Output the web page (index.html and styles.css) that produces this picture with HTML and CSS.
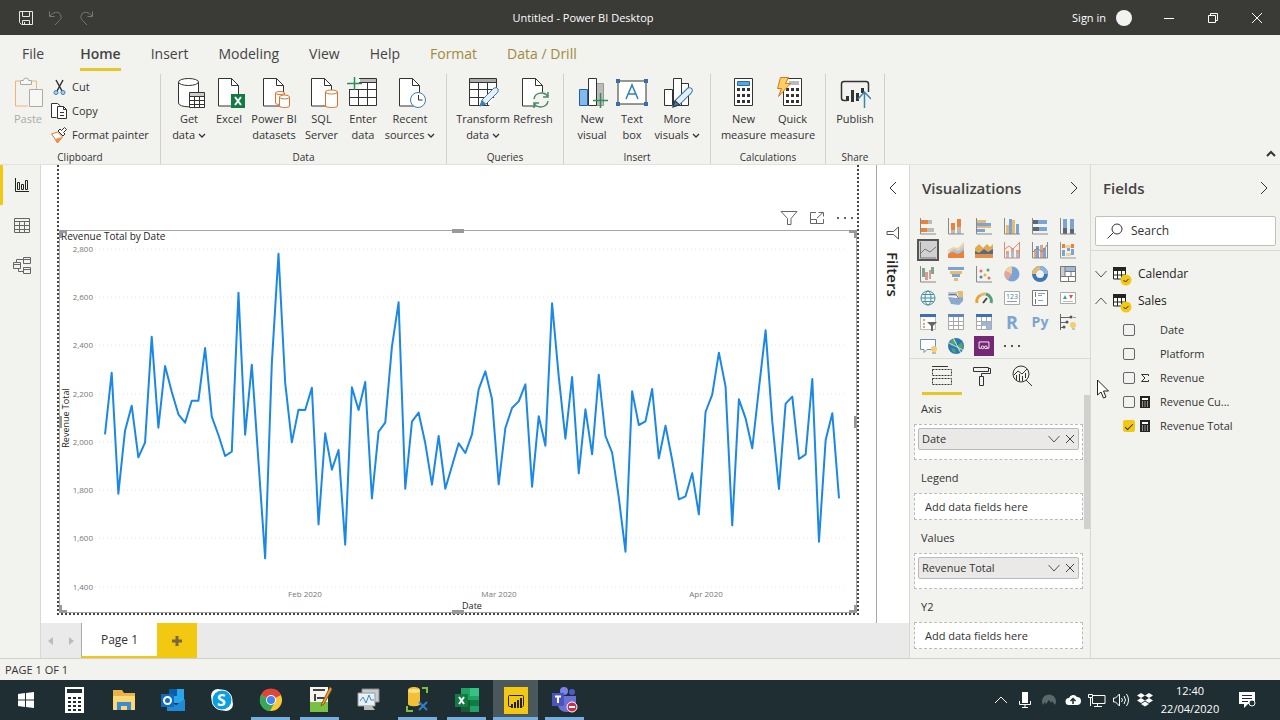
FILE: index.html
```html
<!DOCTYPE html>
<html lang="en">
<head>
    <meta charset="UTF-8">
    <meta name="viewport" content="width=device-width, initial-scale=1.0">
    <title>Untitled - Power BI Desktop</title>
    <link rel="stylesheet" href="styles.css">
</head>
<body>
    <svg class="defs" aria-hidden="true">
        <symbol id="doc" viewBox="0 0 32 32"><path d="M5.500 1.500h13l7 7v20.500h-20z" fill="#fff" stroke="#333"/><path d="M18.500 1.500v7h7" fill="none" stroke="#333"/></symbol>
        <symbol id="chev" viewBox="0 0 8 6"><path d="M1 1l3 3 3-3" fill="none" stroke="#333" stroke-width="1.300"/></symbol>
        <symbol id="down" viewBox="0 0 12 12"><path d="M0.500 3l5.500 6 5.500-6" fill="none" stroke="#555"/></symbol>
        <symbol id="up" viewBox="0 0 12 12"><path d="M0.500 9l5.500-6 5.500 6" fill="none" stroke="#555"/></symbol>
        <symbol id="cross" viewBox="0 0 12 12"><path d="M2 2l8 8M10 2l-8 8" fill="none" stroke="#444"/></symbol>
        <symbol id="pencil" viewBox="0 0 20 20"><path d="M1 19l2-6L15 1q3-1 4 1 1 2-1 4L7 17z" fill="#e6f0fa" stroke="#3b7db5"/><path d="M1 19l2-6 4 4z" fill="#3b7db5"/></symbol>
        <symbol id="tbl" viewBox="0 0 19 19"><path d="M.5 1h12v11H.5z" fill="#fff" stroke="#252423"/><path d="M0 0h13v4H0z" fill="#252423"/><path d="M0 8h13M4.500 3v9M8.500 3v9" stroke="#252423"/><circle cx="13" cy="13" r="5.500" fill="#f2c811"/><path d="M10.500 13l2 2 3-3" fill="none" stroke="#252423"/></symbol>
        <symbol id="calc" viewBox="0 0 10 12"><path d="M0 0h10v12H0z" fill="#252423"/><path d="M2 2h6v2H2zM2 5.500h1v1H2zM4.500 5.500h1v1h-1zM7 5.500h1v1H7zM2 7.500h1v1H2zM4.500 7.500h1v1h-1zM7 7.500h1v1H7zM2 9.500h1v1H2zM4.500 9.500h1v1h-1zM7 9.500h1v1H7z" fill="#fff"/></symbol>
        <symbol id="keypad" viewBox="0 0 20 28"><path d="M.5.500h18v27H.5z" fill="#fff" stroke="#333"/><path d="M3 10h3v3H3zM8 10h3v3H8zM13 10h3v3h-3zM3 16h3v3H3zM8 16h3v3H8zM13 16h3v3h-3zM3 22h3v3H3zM8 22h3v3H8zM13 22h3v3h-3z" fill="#333"/></symbol>
    </svg>

    <header class="titlebar">
        <div class="quick">
            <button aria-label="Save"><svg width="16" height="16" fill="none" stroke="#e8e8e8"><path d="M1.500 1.500h13v13h-11l-2-2zM4.500 1.500v5h7v-5M4.500 14.500v-4h7v4M6.500 12v2"/></svg></button>
            <button aria-label="Undo"><svg width="16" height="16" fill="none" stroke="#777"><path d="M1.500 1.500v5h5M2 6c3-4 8-5 10-2s1 5-1 7l-4 4"/></svg></button>
            <button aria-label="Redo"><svg width="16" height="16" fill="none" stroke="#777"><path d="M14.500 1.500v5h-5M14 6c-3-4-8-5-10-2s-1 5 1 7l4 4"/></svg></button>
        </div>
        <div class="window-title">Untitled - Power BI Desktop</div>
        <div class="window-actions">
            <button class="signin">Sign in <span class="avatar"></span></button>
            <button class="win" aria-label="Minimize"><svg width="12" height="12" stroke="#fff"><path d="M1 6.500h10"/></svg></button>
            <button class="win" aria-label="Restore"><svg width="12" height="12" fill="none" stroke="#fff"><path d="M1.500 3.500h7v7h-7zM3.500 3V1.500h7v7H9"/></svg></button>
            <button class="win" aria-label="Close"><svg width="12" height="12" stroke="#fff"><path d="M1 1l10 10M11 1L1 11"/></svg></button>
        </div>
    </header>

    <nav class="tabs">
        <button class="file">File</button>
        <button class="active">Home</button>
        <button>Insert</button>
        <button>Modeling</button>
        <button>View</button>
        <button>Help</button>
        <button class="context">Format</button>
        <button class="context">Data / Drill</button>
    </nav>

    <section class="ribbon">
        <div class="group">
            <div class="tools clipboard">
                <button class="tool disabled" disabled><svg class="icon" viewBox="0 0 32 32" fill="none"><path d="M8 4H3.500v25H16" stroke="#f0b478"/><path d="M20 4h4.500v8" stroke="#f0b478"/><path d="M8.500 3.500h3q0-2.500 2.500-2.500t2.500 2.500h3v4h-11zM17.500 12.500h13v17h-13z" fill="#f7f7f5" stroke="#aaa"/></svg>Paste</button>
                <div class="small-tools">
                    <button><svg width="18" height="18" viewBox="0 0 18 18" fill="none"><path d="M6 2l6 11M13 2L7 13" stroke="#333" stroke-width="1.500"/><circle cx="6" cy="14.500" r="2" stroke="#3b7db5" fill="#a9d0ee"/><circle cx="13" cy="14.500" r="2" stroke="#3b7db5" fill="#a9d0ee"/></svg>Cut</button>
                    <button><svg width="18" height="18" viewBox="0 0 18 18" fill="#fff" stroke="#333"><path d="M6.500 15.500h-5v-14h6l3 2.500"/><path d="M7.500 4.500h6l3 3v9h-9zM13.500 4.500v3h3M10 10.500h4M10 13.500h4"/></svg>Copy</button>
                    <button><svg width="18" height="18" viewBox="0 0 18 18" fill="none"><path d="M1.500 8l6-2 5 5-5 6-2-3-1-2z" fill="#fff" stroke="#e07a2e"/><path d="M5 13l7-2-4 6z" fill="#e8944c"/><path d="M8 5l5 5 2-2-1.500-1.500 3-3-2-2-3 3L10 3z" fill="#fff" stroke="#333"/></svg>Format painter</button>
                </div>
            </div>
            <div class="caption">Clipboard</div>
        </div>

        <div class="group">
            <div class="tools data">
                <button class="tool"><svg class="icon" viewBox="0 0 32 32"><path d="M5.500 5v21c0 5 20 5 20 0V5" fill="#fff" stroke="#333"/><ellipse cx="15.500" cy="5" rx="10" ry="3.500" fill="#fff" stroke="#333"/><path d="M16.500 15.500h15v15h-15z" fill="#fff" stroke="#333"/><path d="M17 16h14v3H17z" fill="#ccc"/><path d="M16 19.500h16M16 23.500h16M16 27.500h16M21.500 19v12M26.500 19v12" stroke="#333"/></svg>Get<br><span>data <svg class="chev"><use href="#chev"/></svg></span></button>
                <button class="tool"><svg class="icon" viewBox="0 0 32 32"><use href="#doc"/><path d="M18 17h14v14H18z" fill="#107c41"/><path d="M22 20l6 8M28 20l-6 8" stroke="#fff" stroke-width="2"/></svg>Excel</button>
                <button class="tool"><svg class="icon" viewBox="0 0 32 32"><use href="#doc"/><path d="M17.500 16v10c0 2 9 2 9 0V16z" fill="#fff" stroke="#d9722e"/><ellipse cx="22" cy="16" rx="4.500" ry="1.500" fill="#fff" stroke="#d9722e"/><path d="M21.500 20v9c0 2 10 2 10 0v-9z" fill="#fff" stroke="#d9722e"/><ellipse cx="26.500" cy="20" rx="5" ry="2" fill="#fff" stroke="#d9722e"/></svg>Power BI<br>datasets</button>
                <button class="tool"><svg class="icon" viewBox="0 0 32 32"><use href="#doc"/><path d="M19.500 15v14c0 2 12 2 12 0V15z" fill="#fff" stroke="#d9722e"/><ellipse cx="25.500" cy="15" rx="6" ry="2" fill="#fff" stroke="#d9722e"/></svg>SQL<br>Server</button>
                <button class="tool"><svg class="icon" viewBox="0 0 32 32"><path d="M2.500 1.500h27v27h-27z" fill="#fff" stroke="#333"/><path d="M13 2h16v3H13z" fill="#bbb"/><path d="M2 5.500h27M2 12.500h27M2 20.500h27M11.500 5v23M20.500 5v23" stroke="#333"/><path d="M0 0h12v12H0z" fill="#f3f2f1"/><path d="M0 6.500h15M7.500 0v13" stroke="#2f8f5b" stroke-width="1.500"/></svg>Enter<br>data</button>
                <button class="tool"><svg class="icon" viewBox="0 0 32 32"><use href="#doc"/><circle cx="24" cy="23" r="7.500" fill="#fff" stroke="#3b7db5"/><path d="M24.500 18v5h4" fill="none" stroke="#333"/></svg>Recent<br><span>sources <svg class="chev"><use href="#chev"/></svg></span></button>
            </div>
            <div class="caption">Data</div>
        </div>

        <div class="group">
            <div class="tools queries">
                <button class="tool"><svg class="icon" viewBox="0 0 32 32"><path d="M2.500 1.500h27v27h-27z" fill="#fff" stroke="#333"/><path d="M3 2h26v3H3z" fill="#aaa"/><path d="M2 5.500h27M2 12.500h27M2 20.500h27M11.500 5v23M20.500 5v23" stroke="#333"/><path d="M22 29h9V14z" fill="#f3f2f1"/><use href="#pencil" x="12" y="10" width="20" height="20"/></svg>Transform<br><span>data <svg class="chev"><use href="#chev"/></svg></span></button>
                <button class="tool"><svg class="icon" viewBox="0 0 32 32"><use href="#doc"/><circle cx="24" cy="23" r="8" fill="#f3f2f1"/><path d="M17 22c1-7 11-8 14-2M31 15v5h-5M31 24c-1 7-11 8-14 2M17 31v-5h5" fill="none" stroke="#4a8a68" stroke-width="1.500"/></svg>Refresh</button>
            </div>
            <div class="caption">Queries</div>
        </div>

        <div class="group">
            <div class="tools insert">
                <button class="tool"><svg class="icon" viewBox="0 0 32 32"><path d="M3.500 12.500h8v16h-8z" fill="#84b9ec" stroke="#1f5fa8"/><path d="M20.500 6.500h7v22h-7z" fill="#bbb" stroke="#999"/><path d="M12.500 1.500h8v27h-8z" fill="#fff" stroke="#333"/><path d="M17 23.500h15M24.500 16v15" stroke="#2f8f5b" stroke-width="1.500"/></svg>New<br>visual</button>
                <button class="tool"><svg class="icon" viewBox="0 0 32 32"><path d="M2 4h28v23H2z" fill="#fff" stroke="#333"/><path d="M0 2h4v4H0zM28 2h4v4h-4zM0 25h4v4H0zM28 25h4v4h-4z" fill="#3b6ea5"/><path d="M10 22l6-14 6 14M12 17h8" fill="none" stroke="#2f80b5" stroke-width="1.500"/></svg>Text<br>box</button>
                <button class="tool"><svg class="icon" viewBox="0 0 32 32" fill="#fff" stroke="#333"><path d="M3.500 12.500h8v16h-8zM20.500 6.500h7v22h-7zM12.500 1.500h8v27h-8z"/><use href="#pencil" x="11" y="10" width="21" height="21"/></svg>More<br><span>visuals <svg class="chev"><use href="#chev"/></svg></span></button>
            </div>
            <div class="caption">Insert</div>
        </div>

        <div class="group">
            <div class="tools calculations">
                <button class="tool"><svg class="icon" viewBox="0 0 32 32"><use href="#keypad" x="6" y="1" width="20" height="28"/><path d="M9.500 4.500h12v4h-12z" fill="#5aa5e0" stroke="#2a6da8"/></svg>New<br>measure</button>
                <button class="tool"><svg class="icon" viewBox="0 0 32 32"><use href="#keypad" x="6" y="1" width="20" height="28"/><path d="M12 4h10v4H12z" fill="#bbb"/><path d="M3.500.500h8l-3 6h5l-12 13 3-8h-4z" fill="#fbd05c" stroke="#d9722e"/></svg>Quick<br>measure</button>
            </div>
            <div class="caption">Calculations</div>
        </div>

        <div class="group">
            <div class="tools share">
                <button class="tool"><svg class="icon" viewBox="0 0 32 32"><path d="M8 23.500H5q-2.500 0-2.500-2.500V7q0-2.500 2.500-2.500h22q2.500 0 2.500 2.500v8" fill="none" stroke="#333" stroke-width="1.500"/><path d="M7 19h3v5H7zM12 13h3v12h-3zM17 16h3v8h-3zM22 11h3v5h-3z" fill="#333"/><path d="M25.500 31V16M19 22l6.500-7 6.500 7" fill="none" stroke="#3b86ad" stroke-width="1.500"/></svg>Publish</button>
            </div>
            <div class="caption">Share</div>
        </div>
        <button class="collapse" aria-label="Collapse the ribbon"><svg width="10" height="8" viewBox="0 0 10 8"><path d="M1 6l4-4 4 4" fill="none" stroke="#333" stroke-width="2"/></svg></button>
    </section>

    <main class="workspace">
        <nav class="rail">
            <button class="active" aria-label="Report view"><svg width="16" height="16" fill="none" stroke="#222"><path d="M1.500 1v13.500H15M3.500 5.500h2v7h-2zM7.500 7.500h2v5h-2zM11.500 3.500h2v9h-2z"/></svg></button>
            <button aria-label="Data view"><svg width="16" height="16" fill="none" stroke="#666"><path d="M.5 1.500h15v14H.5zM.5 4.500h15M.5 8.500h15M.5 12.500h15M5.500 4v11M10.500 4v11"/></svg></button>
            <button aria-label="Model view"><svg width="18" height="18" fill="none" stroke="#666"><path d="M.5 6.500h7v6h-7zM.5 8.500h7M10.500 1.500h7v6h-7zM10.500 3.500h7M10.500 11.500h7v6h-7zM10.500 13.500h7M3.500 6V3.500h7M5.500 13v2.500h5"/></svg></button>
        </nav>

        <div class="center">
            <div class="stage">
                <div class="canvas">
                    <div class="page">
                        <div class="visual-tools">
                            <button aria-label="Filters"><svg width="18" height="16" fill="none" stroke="#666"><path d="M1 1.500h16l-6 7v6H7.500v-6z"/></svg></button>
                            <button aria-label="Focus mode"><svg width="16" height="14" fill="none" stroke="#666"><path d="M7 1.500H1.500v11h13V8M1.500 8.500h6v4M8 7l6-5.500M9.500 1.500h5v4"/></svg></button>
                            <button aria-label="More options"><svg width="16" height="4" fill="#666"><path d="M0 1h2v2H0zM7 1h2v2H7zM14 1h2v2h-2z"/></svg></button>
                        </div>
                        <div class="visual">
                            <i class="handle tl"></i><i class="handle top"></i><i class="handle tr"></i>
                            <i class="handle left"></i><i class="handle right"></i>
                            <i class="handle bl"></i><i class="handle bottom"></i><i class="handle br"></i>
                            <svg class="chart" viewBox="0 0 796 381">
                                <text class="chart-title" x="1" y="9">Revenue Total by Date</text>
                                <g class="grid">
                                    <path d="M35 18h752M35 66h752M35 114h752M35 163h752M35 211h752M35 259h752M35 307h752M35 356h752"/>
                                </g>
                                <g class="ticks" text-anchor="end">
                                    <text x="33" y="21">2,800</text>
                                    <text x="33" y="69">2,600</text>
                                    <text x="33" y="117">2,400</text>
                                    <text x="33" y="166">2,200</text>
                                    <text x="33" y="214">2,000</text>
                                    <text x="33" y="262">1,800</text>
                                    <text x="33" y="310">1,600</text>
                                    <text x="33" y="359">1,400</text>
                                </g>
                                <g class="ticks" text-anchor="middle">
                                    <text x="245" y="366">Feb 2020</text>
                                    <text x="439" y="366">Mar 2020</text>
                                    <text x="646" y="366">Apr 2020</text>
                                </g>
                                <text class="axis" text-anchor="middle" x="412" y="378">Date</text>
                                <text class="axis" text-anchor="middle" transform="translate(9 187) rotate(-90)">Revenue Total</text>
                                <!-- one point per day, 2 Jan to 21 Apr -->
                                <svg x="45" y="-11" width="734" height="400" viewBox="0 0 2200 1200" preserveAspectRatio="none" overflow="visible">
                                    <polyline class="line" points="0,643 20,458 40,821 60,632 80,557 100,712 120,668 140,350 160,623 180,438 200,515 220,583 240,608 260,542 280,542 300,384 320,590 340,645 360,708 380,695 400,218 420,644 440,434 460,725 480,1015 500,430 520,101 540,488 560,667 580,569 600,570 620,503 640,913 660,640 680,749 700,690 720,974 740,502 760,570 780,486 800,835 820,635 840,608 860,380 880,247 900,806 920,605 940,578 960,670 980,794 1000,648 1020,806 1040,738 1060,670 1080,699 1100,643 1120,508 1140,454 1160,538 1180,793 1200,624 1220,564 1240,544 1260,493 1280,800 1300,589 1320,677 1340,250 1360,470 1380,656 1400,471 1420,760 1440,568 1460,703 1480,464 1500,648 1520,698 1540,833 1560,995 1580,514 1600,615 1620,604 1640,507 1660,715 1680,617 1700,720 1720,838 1740,829 1760,760 1780,883 1800,576 1820,524 1840,398 1860,500 1880,916 1900,538 1920,595 1940,685 1960,505 1980,331 2000,605 2020,807 2040,551 2060,530 2080,717 2100,703 2120,477 2140,965 2160,660 2180,580 2200,835"/>
                                </svg>
                            </svg>
                        </div>
                    </div>
                </div>
                <aside class="filters">
                    <button aria-label="Expand filters"><svg width="8" height="14" fill="none" stroke="#333"><path d="M7 1L1 7l6 6"/></svg></button>
                    <svg class="funnel" width="14" height="14" fill="none" stroke="#555"><path d="M12.500 1v12l-5-4.500H1v-3h6.500z"/></svg>
                    <span>Filters</span>
                </aside>
            </div>
            <div class="page-tabs">
                <button class="step" aria-label="Previous page"><svg width="6" height="8"><path d="M5 0v8L0 4z" fill="#bbb"/></svg></button>
                <button class="step" aria-label="Next page"><svg width="6" height="8"><path d="M1 0v8l5-4z" fill="#bbb"/></svg></button>
                <button class="page-tab">Page 1</button>
                <button class="add" aria-label="New page"><svg width="12" height="12"><path d="M6 1v10M1 6h10" stroke="#77683a" stroke-width="3"/></svg></button>
            </div>
        </div>

        <aside class="pane viz">
            <div class="pane-head"><h2>Visualizations</h2><button aria-label="Collapse"><svg width="8" height="14" fill="none" stroke="#333"><path d="M1 1l6 6-6 6"/></svg></button></div>
            <div class="gallery">
                <button aria-label="Stacked bar chart"><svg viewBox="0 0 18 18"><path d="M2 3h7v4H2zM2 11h6v4H2z" fill="#e8833a"/><path d="M9 3h4v4H9zM8 11h7v4H8z" fill="#bbb"/><path d="M1.500 1v16H17" fill="none" stroke="#888"/></svg></button>
                <button aria-label="Stacked column chart"><svg viewBox="0 0 18 18"><path d="M4 6h4v7H4zM10 2h4v8h-4z" fill="#e8833a"/><path d="M4 13h4v4H4zM10 10h4v7h-4z" fill="#bbb"/><path d="M1.500 1v16H17" fill="none" stroke="#888"/></svg></button>
                <button aria-label="Clustered bar chart"><svg viewBox="0 0 18 18"><path d="M2 3h9v3H2zM2 9h14v2H2z" fill="#e3bc72"/><path d="M2 6h14v3H2zM2 12h8v3H2z" fill="#7ba3d4"/><path d="M1.500 1v16H17" fill="none" stroke="#888"/></svg></button>
                <button aria-label="Clustered column chart"><svg viewBox="0 0 18 18"><path d="M3 8h3v9H3zM9 3h3v14H9z" fill="#e3bc72"/><path d="M6 2h3v15H6zM13 7h3v10h-3z" fill="#7ba3d4"/><path d="M1.500 1v16H17" fill="none" stroke="#888"/></svg></button>
                <button aria-label="100% stacked bar chart"><svg viewBox="0 0 18 18"><path d="M2 3h5v4H2zM2 10h6v4H2z" fill="#5f6672"/><path d="M7 3h9v4H7zM8 10h8v4H8z" fill="#7ba3d4"/><path d="M1.500 1v16H17" fill="none" stroke="#888"/></svg></button>
                <button aria-label="100% stacked column chart"><svg viewBox="0 0 18 18"><path d="M4 2h4v9H4zM11 2h4v10h-4z" fill="#7ba3d4"/><path d="M4 11h4v6H4zM11 12h4v5h-4z" fill="#5f6672"/><path d="M1.500 1v16H17" fill="none" stroke="#888"/></svg></button>

                <button class="selected" aria-label="Line chart"><svg viewBox="0 0 18 18"><path d="M1.500 1v16H17M2 12l4-4 5 3 6-5" fill="none" stroke="#777"/></svg></button>
                <button aria-label="Area chart"><svg viewBox="0 0 18 18"><path d="M1 13l6-5 5 2 5-3v10H1z" fill="#e8833a"/><path d="M1 12l5-4 5 2 6-6v5l-6 4-5-2z" fill="#aac6e6"/><path d="M1 9l5-3 5 1 6-6v4l-6 5-5-2-5 3z" fill="#ecd3a0"/></svg></button>
                <button aria-label="Stacked area chart"><svg viewBox="0 0 18 18"><path d="M0 7l4-4 4 4 4-4 3 3 3-3v14H0z" fill="#e3a94f"/><path d="M0 10l4 2 5-4 4 3 5-3v5H0z" fill="#546a85"/><path d="M0 13h18v4H0z" fill="#e0904a"/></svg></button>
                <button aria-label="Line and stacked column chart"><svg viewBox="0 0 18 18"><path d="M3 10h3v7H3zM8 7h3v10H8zM13 9h3v8h-3z" fill="#e3a27a"/><path d="M3 13h3v4H3zM8 11h3v6H8zM13 12h3v5h-3z" fill="#a9bdd6"/><path d="M1.500 1v16h15V1M2 8l4-3 4 3 6-6" fill="none" stroke="#d98a7a"/></svg></button>
                <button aria-label="Line and clustered column chart"><svg viewBox="0 0 18 18"><path d="M3 8h2v9H3zM9 4h3v13H9z" fill="#e3a27a"/><path d="M5 5h3v12H5zM12 7h3v10h-3z" fill="#7ba3d4"/><path d="M1.500 1v16h15V1M2 11l4-4 5 4 5-7" fill="none" stroke="#888"/></svg></button>
                <button aria-label="Ribbon chart"><svg viewBox="0 0 18 18"><path d="M3 3h3v4H3zM12 3h3v4h-3z" fill="#e8833a"/><path d="M3 9h3v6H3zM12 8h3v6h-3zM8 7h3v3H8z" fill="#7ba3d4"/><path d="M6 4h6v3H6zM7 12h5v3H7z" fill="#ecd3a0"/><path d="M1.500 1v16H17" fill="none" stroke="#999"/></svg></button>

                <button aria-label="Waterfall chart"><svg viewBox="0 0 18 18"><path d="M3 3h3v9H3zM12 2h3v7h-3z" fill="#78a890"/><path d="M6 7h3v8H6zM10 5h2v9h-2z" fill="#d99a98"/><path d="M1.500 1v16H17" fill="none" stroke="#888"/></svg></button>
                <button aria-label="Funnel chart"><svg viewBox="0 0 18 18"><path d="M1 2h16v3H1zM5 9h8v3H5z" fill="#7ba3d4"/><path d="M3 6h12v3H3zM7 13h4v3H7z" fill="#e3bc72"/></svg></button>
                <button aria-label="Scatter chart"><svg viewBox="0 0 18 18"><path d="M1.500 1v16H17" fill="none" stroke="#888"/><circle cx="6" cy="6" r="1.500" fill="#e07070"/><circle cx="10" cy="10" r="1.500" fill="#e3bc32"/><circle cx="13" cy="5" r="1.500" fill="#5a9f7a"/><circle cx="6" cy="12" r="1.500" fill="#4a80c4"/><circle cx="14" cy="13" r="1.500" fill="#e07070"/></svg></button>
                <button aria-label="Pie chart"><svg viewBox="0 0 18 18"><circle cx="9" cy="9" r="7.500" fill="#7ba3d4"/><path d="M9 9V1.500A7.500 7.500 0 0 0 2 6z" fill="#ecd3a0"/><path d="M9 9L2 6a7.500 7.500 0 0 0 3 9z" fill="#e3a5a0"/></svg></button>
                <button aria-label="Donut chart"><svg viewBox="0 0 18 18" fill="none" stroke-width="4"><circle cx="9" cy="9" r="6" stroke="#3f76b8"/><path d="M3 9a6 6 0 0 1 6-6" stroke="#e3bc72"/><path d="M9 3a6 6 0 0 1 6 6" stroke="#8fb3de"/></svg></button>
                <button aria-label="Treemap"><svg viewBox="0 0 18 18"><path d="M1.500 1.500h15v15h-15z" fill="#fff"/><path d="M6 2h10v4H6z" fill="#9bb8dc"/><path d="M2 2h4v9H2z" fill="#ccc"/><path d="M1.500 1.500h15v15h-15zM6 1v10M1 11.500h16M6 6.500h11M9.500 11v6M12 6v5" fill="none" stroke="#777"/></svg></button>

                <button aria-label="Map"><svg viewBox="0 0 18 18" fill="none" stroke="#4a90a4"><circle cx="9" cy="9" r="7"/><ellipse cx="9" cy="9" rx="3" ry="7"/><path d="M2 9h14M3 5.500h12M3 12.500h12"/></svg></button>
                <button aria-label="Filled map"><svg viewBox="0 0 18 18"><path d="M1 3h9v4H1z" fill="#b9c4d4"/><path d="M10 2h6v7h-4z" fill="#e3bc72"/><path d="M1 8l8 1 7-1v4l-4 4-8-1z" fill="#8aa9d2"/><path d="M2 5.500h7l3 4" fill="none" stroke="#777"/></svg></button>
                <button aria-label="Gauge"><svg viewBox="0 0 18 18" fill="none" stroke-width="3"><path d="M2 14a7 7 0 0 1 4-8" stroke="#e8a33a"/><path d="M6 6a7 7 0 0 1 5-1" stroke="#e3bc72"/><path d="M11 5a7 7 0 0 1 5 9" stroke="#5a9f7a"/><path d="M8 14l4-5" stroke="#444" stroke-width="2"/></svg></button>
                <button aria-label="Card"><svg viewBox="0 0 18 18"><path d="M1.500 2.500h15v13h-15z" fill="#fff" stroke="#aaa"/><text x="3" y="10" font-size="7" fill="#4a7f98">123</text><path d="M4 12.500h10" stroke="#999"/></svg></button>
                <button aria-label="Multi-row card"><svg viewBox="0 0 18 18"><path d="M1.500 1.500h15v15h-15z" fill="#fff" stroke="#777"/><path d="M4.500 3v5M4.500 10v5" stroke="#777"/><path d="M7 4.500h7M7 6.500h4M7 11.500h5" stroke="#7ba3d4"/></svg></button>
                <button aria-label="KPI"><svg viewBox="0 0 18 18"><path d="M1.500 3.500h15v11h-15z" fill="#fff" stroke="#aaa"/><path d="M4 10l2-4 2 4z" fill="#4a9f8a"/><path d="M10 6h4l-2 4z" fill="#d9534f"/><path d="M4 12.500h10" stroke="#bbb"/></svg></button>

                <button aria-label="Slicer"><svg viewBox="0 0 18 18"><path d="M1.500 1.500h15v15h-15z" fill="#fff" stroke="#bbb"/><path d="M1 1h16v3H1z" fill="#3f6fb0"/><path d="M4 6h2v2H4zM4 10h2v2H4zM4 13h2v2H4z" fill="#e3a27a"/><path d="M8 9h10l-4 4v5h-2v-5z" fill="#666"/></svg></button>
                <button aria-label="Table"><svg viewBox="0 0 18 18"><path d="M1.500 1.500h15v15h-15zM1 8.500h15M1 12.500h15M6.500 4v13M11.500 4v13" fill="#fff" stroke="#aaa"/><path d="M1 1h16v3H1z" fill="#5f86bb"/></svg></button>
                <button aria-label="Matrix"><svg viewBox="0 0 18 18"><path d="M1.500 1.500h15v15h-15zM1 8.500h15M1 12.500h15M6.500 4v13M11.500 4v13" fill="#fff" stroke="#aaa"/><path d="M1 1h16v3H1z" fill="#3f6fb0"/><path d="M7 9h4v4H7zM12 9h4v7h-4z" fill="#9bb8dc"/></svg></button>
                <button class="letters" aria-label="R script visual"><b class="big">R</b></button>
                <button class="letters" aria-label="Python visual"><b>Py</b></button>
                <button aria-label="Key influencers"><svg viewBox="0 0 18 18"><path d="M1.500 1v16M2 4.500h9M2 9.500h6M2 14.500h3" stroke="#666" fill="none"/><circle cx="12" cy="4" r="1.500" fill="#555"/><circle cx="8" cy="9" r="1.500" fill="#555"/><circle cx="5" cy="14" r="1.500" fill="#555"/><path d="M14 4.500h3M13 16h3" stroke="#999"/><circle cx="14" cy="12" r="3" fill="#f0cf6c"/></svg></button>

                <button aria-label="Q&amp;A"><svg viewBox="0 0 18 18"><path d="M1.500 2.500h15v10H8l-3 3v-3H1.500z" fill="#fff" stroke="#6f8fb8"/><circle cx="15" cy="12" r="3" fill="#f0cf6c"/><path d="M13 16h4" stroke="#888"/></svg></button>
                <button aria-label="ArcGIS Maps"><svg viewBox="0 0 18 18"><circle cx="9" cy="9" r="8" fill="#2b78b8"/><path d="M4 3l4-1 2 4-4 3-3-1zM10 9l5-4 1 5-4 5zM4 11l4 1 1 4-3-1z" fill="#54a567"/><path d="M2 6l14 7M6 1l8 15" stroke="#cfe5d4"/></svg></button>
                <button class="powerapps" aria-label="Power Apps"><svg viewBox="0 0 20 20" fill="none" stroke="#fff"><path d="M7 12.500H4.500v-7h11v7H13"/><circle cx="8.500" cy="11.500" r="1.500"/><circle cx="12" cy="11.500" r="1.500"/></svg></button>
                <button aria-label="Import a visual"><svg viewBox="0 0 18 18" fill="#555"><path d="M1 8h2v2H1zM8 8h2v2H8zM15 8h2v2h-2z"/></svg></button>
            </div>
            <div class="pane-tabs">
                <button class="active" aria-label="Fields"><svg width="22" height="20" fill="none" stroke="#333"><path d="M1 .5h16"/><path d="M1.500 3.500h19v6h-19zM1.500 12.500h19v6h-19z" stroke-dasharray="2 1"/></svg></button>
                <button aria-label="Format"><svg width="20" height="22" fill="none" stroke="#333"><path d="M1.500 2.500h15v4h-15zM16.500 3.500h2v5h-9v3M7.500 11.500h4v9h-4z"/></svg></button>
                <button aria-label="Analytics"><svg width="22" height="22" fill="none" stroke="#333"><circle cx="10" cy="9" r="8"/><path d="M3 10l4-4 4 3 5-5M5.500 10v5M8.500 9v7M11.500 11v5M14.500 8v5M15 15l6 6"/></svg></button>
            </div>
            <div class="wells">
                <h3>Axis</h3>
                <div class="well">
                    <div class="field">Date <button aria-label="Date options"><svg width="12" height="12"><use href="#down"/></svg></button><button aria-label="Remove Date"><svg width="12" height="12"><use href="#cross"/></svg></button></div>
                </div>
                <h3>Legend</h3>
                <div class="well empty">Add data fields here</div>
                <h3>Values</h3>
                <div class="well">
                    <div class="field">Revenue Total <button aria-label="Revenue Total options"><svg width="12" height="12"><use href="#down"/></svg></button><button aria-label="Remove Revenue Total"><svg width="12" height="12"><use href="#cross"/></svg></button></div>
                </div>
                <h3>Y2</h3>
                <div class="well empty">Add data fields here</div>
                <i class="scroll-thumb"></i>
            </div>
        </aside>

        <aside class="pane fields">
            <div class="pane-head"><h2>Fields</h2><button aria-label="Collapse"><svg width="8" height="14" fill="none" stroke="#333"><path d="M1 1l6 6-6 6"/></svg></button></div>
            <div class="search">
                <label for="search" aria-label="Search"><svg width="16" height="16" fill="none" stroke="#333"><circle cx="10" cy="6" r="5"/><path d="M6.500 9.500L.5 15.500"/></svg></label>
                <input id="search" type="text" placeholder="Search">
            </div>
            <div class="tree">
                <button class="table-row"><svg width="12" height="12"><use href="#down"/></svg><svg class="table-icon" width="19" height="19"><use href="#tbl"/></svg>Calendar</button>
                <button class="table-row"><svg width="12" height="12"><use href="#up"/></svg><svg class="table-icon" width="19" height="19"><use href="#tbl"/></svg>Sales</button>
                <label><input type="checkbox"><span class="kind"></span>Date</label>
                <label><input type="checkbox"><span class="kind"></span>Platform</label>
                <label><input type="checkbox"><span class="kind"><svg width="10" height="10" fill="none" stroke="#333"><path d="M8.500 3V1.500h-7L5 5 1.500 8.500h7V7"/></svg></span>Revenue</label>
                <label><input type="checkbox"><span class="kind"><svg width="10" height="12"><use href="#calc"/></svg></span>Revenue Cu...</label>
                <label><input type="checkbox" checked><span class="kind"><svg width="10" height="12"><use href="#calc"/></svg></span>Revenue Total</label>
            </div>
            <svg class="cursor" width="13" height="20"><path d="M.5 1v15l3.500-3 2.500 6 2.500-1-2.500-6h5z" fill="#fff" stroke="#222"/></svg>
        </aside>
    </main>

    <div class="status">PAGE 1 OF 1</div>

    <footer class="taskbar">
        <div class="apps">
            <button aria-label="Start"><svg width="16" height="16" fill="#fff"><path d="M0 2l7-1v6.500H0zM8 1l8-1v7.500H8zM0 8.500h7V15l-7-1zM8 8.500h8V16l-8-1z"/></svg></button>
            <button aria-label="Calculator"><svg width="20" height="26"><path d="M0 0h19v26H0z" fill="#fff"/><path d="M2 2h15v4H2zM3 10h3v2H3zM8 10h3v2H8zM13 10h3v2h-3zM3 14h3v2H3zM8 14h3v2H8zM13 14h3v2h-3zM3 18h3v2H3zM8 18h3v2H8zM13 18h3v2h-3zM3 22h3v2H3zM8 22h3v2H8zM13 22h3v2h-3z" fill="#1e2e33"/></svg></button>
            <button aria-label="File Explorer"><svg width="22" height="22"><path d="M0 1h9l2 3h11v17H0z" fill="#e9b348"/><path d="M0 7h22v14H0z" fill="#fbd775"/><path d="M4 13h14v8h-4v-4H8v4H4z" fill="#3a8bd0"/></svg></button>
            <button aria-label="Outlook"><svg width="24" height="24"><path d="M8 1h15v14H8z" fill="#28a8ea"/><path d="M8 1h8v7H8z" fill="#0a5ea8"/><path d="M6 11l9 6 9-6v12H6z" fill="#1f8ad6"/><path d="M0 6h13v13H0z" fill="#0f6cbd"/><circle cx="6.500" cy="12.500" r="3.500" fill="none" stroke="#fff" stroke-width="2"/></svg></button>
            <button aria-label="Skype"><svg width="24" height="24"><circle cx="8" cy="8" r="7" fill="#fff"/><circle cx="16" cy="16" r="7" fill="#fff"/><circle cx="12" cy="12" r="10" fill="#0a9fe0" stroke="#fff"/><text x="7" y="18" font-size="16" font-weight="700" fill="#fff">S</text></svg></button>
            <button class="running" aria-label="Chrome"><svg width="24" height="24"><circle cx="12" cy="12" r="11" fill="#f8c936"/><path d="M12 12L2 7a11 11 0 0 1 20 0z" fill="#e0443a"/><path d="M12 12L2 7a11 11 0 0 0 9 16l5-9z" fill="#3aa757"/><circle cx="12" cy="12" r="5" fill="#fff"/><circle cx="12" cy="12" r="4" fill="#4285f4"/></svg></button>
            <button class="running" aria-label="Notepad++"><svg width="24" height="28"><path d="M2 1h18v25H2z" fill="#f4f6ee"/><path d="M2 16h18v10H2z" fill="#7ac043"/><path d="M5 4h12M7 8v7M9 12h8" stroke="#444" stroke-width="2"/><path d="M22 1l-8 16-1 3 3-2 8-15z" fill="#f0a030" stroke="#8a5a1a"/></svg></button>
            <button aria-label="Resource monitor"><svg width="24" height="24"><path d="M5 1h17v13H5z" fill="#c8ccd0" stroke="#888"/><path d="M1 5h17v13H1z" fill="#e8f1f8" stroke="#999"/><path d="M3 13l3-4 3 6 3-8 2 5h3" fill="none" stroke="#3b8ac4"/><path d="M7 18h8l3 4H7z" fill="#bbb"/></svg></button>
            <button class="running" aria-label="Data tools"><svg width="24" height="26"><path d="M2 3c0-4 12-4 12 0v14c0 3-12 3-12 0z" fill="#f2c037"/><ellipse cx="8" cy="4" rx="6" ry="2" fill="#fbe08a"/><path d="M16 1h5v5M1 19v5h6" fill="none" stroke="#7ac043" stroke-width="2"/><path d="M13 15l8 8M21 15l-8 8" stroke="#2f80c4" stroke-width="2"/></svg></button>
            <button class="running" aria-label="Excel"><svg width="24" height="24"><path d="M6 0h18v24H6z" fill="#21a366"/><path d="M15 0h9v8h-9z" fill="#33c481"/><path d="M6 12h9v12H6z" fill="#185c37"/><path d="M15 12h9v6h-9z" fill="#107c41"/><path d="M0 6h13v13H0z" fill="#107c41"/><path d="M4 9l5 7M9 9l-5 7" stroke="#fff" stroke-width="2"/></svg></button>
            <button class="running current" aria-label="Power BI Desktop"><svg width="24" height="27"><path d="M0 0h24v27H0z" fill="#f2c811"/><path d="M7 19.500H5.500q-1 0-1-1v-9q0-1 1-1h13q1 0 1 1v9q0 1-1 1" fill="none" stroke="#222"/><path d="M7 17h2v4H7zM10 15h2v6h-2zM13 13h2v8h-2zM16 11h2v10h-2z" fill="#222"/></svg></button>
            <button class="running" aria-label="Teams"><svg width="26" height="26"><circle cx="12" cy="4" r="4" fill="#7b83eb"/><circle cx="20" cy="5" r="3" fill="#5059c9"/><path d="M6 9h18v11q-4 5-9 5-7 0-9-6z" fill="#6a72d8"/><path d="M0 6h12v13H0z" fill="#4b53bc"/><path d="M3 9.500h6M6 9v7" stroke="#fff" stroke-width="2"/><circle cx="20" cy="20" r="5" fill="#c4314b" stroke="#fff"/><path d="M17 20h6" stroke="#fff" stroke-width="2"/></svg></button>
        </div>
        <div class="tray">
            <button aria-label="Hidden icons"><svg width="14" height="16" fill="none" stroke="#fff"><path d="M1 11l6-6 6 6"/></svg></button>
            <button aria-label="Microphone"><svg width="12" height="16"><path d="M3 0h6v11H3z" fill="#fff"/><path d="M.5 9v3.500h11V9M6 13v3M3 15.500h6" fill="none" stroke="#fff"/></svg></button>
            <button aria-label="VPN"><svg width="16" height="16"><path d="M2 13a7 7 0 1 1 12 0l-3-4-1 2-2-3-3 4-1-2z" fill="#5a686c"/></svg></button>
            <button aria-label="OneDrive"><svg width="16" height="16"><path d="M4 13a3.500 3.500 0 0 1 0-7 4.500 4.500 0 0 1 8-1 4 4 0 0 1 0 8z" fill="#fff"/><path d="M8 12V7M5.500 9L8 6.500 10.500 9" fill="none" stroke="#1e2e33" stroke-width="1.500"/></svg></button>
            <button aria-label="Network"><svg width="18" height="16" fill="none" stroke="#fff"><path d="M5 3.500h12v8H4.500V6M.5 2.500h4v3h-4zM9.500 12v3M6 14.500h8M2.500 6v8"/></svg></button>
            <button aria-label="Volume"><svg width="18" height="16" fill="none" stroke="#fff"><path d="M1.500 6v4h2l4 4V2l-4 4zM9.500 6q2 2 0 4M12 4q3 4 0 8M14.500 2q4 6 0 12"/></svg></button>
            <button aria-label="Dropbox"><svg width="16" height="16" fill="#fff"><path d="M4 1l4 2.500L4 6 0 3.500zM12 1l4 2.500L12 6 8 3.500zM4 6l4 2.500L4 11 0 8.500zM12 6l4 2.500-4 2.500-4-2.500zM8 9.500l4 2.500-4 2.500L4 12z"/></svg></button>
            <div class="clock">12:40<br>22/04/2020</div>
            <button class="notice" aria-label="Notifications"><svg width="17" height="18"><path d="M0 1h16v12H9l-4 4v-4H0z" fill="#fff"/><path d="M3 4.500h10M3 7.500h10M3 10.500h6" stroke="#1e2e33"/><circle cx="13" cy="12" r="3" fill="#1e2e33" stroke="#fff"/></svg></button>
        </div>
    </footer>
</body>
</html>
```

FILE: styles.css
```css
* {
    box-sizing: border-box;
}

body {
    margin: 0;
    min-height: 100vh;
    display: flex;
    flex-direction: column;
    font-family: "Open Sans", "Noto Sans", sans-serif;
    font-size: 11px;
    line-height: 16px;
    color: #333;
    background: #f2f2ee;
}

button {
    display: flex;
    align-items: center;
    justify-content: center;
    padding: 0;
    border: none;
    background: none;
    font: inherit;
    color: inherit;
}

h2, h3 {
    margin: 0;
}

svg {
    flex: none;
}

.defs {
    position: absolute;
    width: 0;
    height: 0;
}

/* title bar */
.titlebar {
    display: grid;
    grid-template-columns: 9fr auto 11fr;
    align-items: center;
    height: 35px;
    background: #3a3a36;
    color: #fff;
}

.quick {
    display: flex;
    gap: 14px;
    padding-left: 18px;
}

.window-actions {
    display: flex;
    justify-content: flex-end;
    padding-right: 1px;
}

.signin {
    gap: 10px;
    margin-right: 15px;
}

.avatar {
    width: 16px;
    height: 16px;
    border-radius: 50%;
    background: #f3f2f1;
}

.win {
    width: 44px;
    height: 35px;
}

/* ribbon */
.tabs {
    display: flex;
    gap: 30px;
    height: 36px;
    padding-left: 22px;
    font-size: 14px;
    color: #444;
}

.tabs button {
    padding-top: 4px;
    border-bottom: 3px solid transparent;
}

.tabs .file {
    margin-right: 6px;
}

.tabs .active {
    font-weight: 600;
    border-bottom-color: #e8c62a;
}

.tabs .context {
    color: #a08a3a;
}

.ribbon {
    display: flex;
    height: 94px;
    padding-top: 3px;
    border-bottom: 1px solid #e1e1de;
}

.group {
    display: flex;
    flex-direction: column;
    justify-content: space-between;
    padding: 1px 8px 0;
    border-right: 1px solid #d0d0cc;
}

.tools {
    display: grid;
}

.clipboard {
    grid-template-columns: 40px 104px;
}

.data {
    grid-template-columns: 40px 40px 50px 45px 38px 56px;
}

.queries {
    grid-template-columns: 56px 44px;
}

.insert {
    grid-template-columns: 40px 40px 50px;
}

.calculations {
    grid-template-columns: 49px 49px;
}

.share {
    grid-template-columns: 42px;
}

.tool {
    display: block;
    padding-top: 2px;
    text-align: center;
    white-space: nowrap;
    align-self: start;
}

.icon {
    display: block;
    width: 32px;
    height: 32px;
    margin: 0 auto 2px;
}

.chev {
    width: 8px;
    height: 6px;
}

.disabled {
    color: #aaa;
}

.small-tools button {
    gap: 4px;
    height: 24px;
    padding-left: 2px;
    white-space: nowrap;
}

.caption {
    font-size: 10px;
    line-height: 14px;
    text-align: center;
}

.collapse {
    align-self: flex-end;
    margin: 0 4px 6px auto;
}

/* workspace */
.workspace {
    flex: 1;
    display: flex;
}

.rail {
    width: 41px;
    border-right: 1px solid #d8d8d4;
}

.rail button {
    width: 100%;
    height: 40px;
    border-left: 3px solid transparent;
}

.rail .active {
    border-left-color: #f2c811;
}

.center {
    flex: 1;
    min-width: 0;
    display: flex;
    flex-direction: column;
    background: #fff;
}

.stage {
    flex: 1;
    display: flex;
}

.canvas {
    flex: 1;
    min-width: 0;
    display: flex;
    padding: 0 17px 8px 16px;
}

.page {
    flex: 1;
    min-width: 0;
    display: flex;
    flex-direction: column;
    border: 2px dotted #444;
    border-top: none;
}

.visual-tools {
    display: flex;
    justify-content: flex-end;
    align-items: flex-end;
    gap: 4px;
    height: 65px;
}

.visual-tools button {
    width: 24px;
    height: 24px;
}

.visual {
    position: relative;
    flex: 1;
    border: 1px solid #a6a6a6;
}

.chart {
    display: block;
    width: 100%;
    overflow: visible;
}

.chart-title {
    font-size: 10px;
    fill: #252423;
}

.ticks {
    font-size: 8px;
    fill: #777;
}

.axis {
    font-size: 9px;
    fill: #252423;
}

.grid {
    fill: none;
    stroke: #e6e6e6;
    stroke-dasharray: 1 3;
}

.line {
    fill: none;
    stroke: #1c88e5;
    stroke-width: 6;
    stroke-linejoin: round;
}

.handle {
    position: absolute;
    border: 0 solid #999;
}

.tl { left: -1px; top: -1px; width: 8px; height: 8px; border-width: 3px 0 0 3px; }
.tr { right: -1px; top: -1px; width: 8px; height: 8px; border-width: 3px 3px 0 0; }
.bl { left: -1px; bottom: -1px; width: 8px; height: 8px; border-width: 0 0 3px 3px; }
.br { right: -1px; bottom: -1px; width: 8px; height: 8px; border-width: 0 3px 3px 0; }
.top { left: calc(50% - 6px); top: -2px; width: 12px; border-top-width: 4px; }
.bottom { left: calc(50% - 6px); bottom: -2px; width: 12px; border-top-width: 4px; }
.left { left: -1px; top: calc(50% - 6px); height: 12px; border-left-width: 3px; }
.right { right: -1px; top: calc(50% - 6px); height: 12px; border-left-width: 3px; }

.filters {
    width: 33px;
    display: flex;
    flex-direction: column;
    align-items: center;
    padding-top: 16px;
    border-left: 1px solid #a6a6a6;
}

.funnel {
    margin: 31px 0 12px;
}

.filters span {
    writing-mode: vertical-rl;
    font-size: 15px;
    font-weight: 600;
    color: #252423;
}

.page-tabs {
    display: flex;
    height: 35px;
    background: #eaeaea;
}

.step {
    width: 20px;
}

.page-tab {
    width: 76px;
    border-left: 1px solid #aaa;
    border-bottom: 2px solid #f2c811;
    background: #fff;
    font-size: 12px;
}

.add {
    width: 40px;
    background: #f2c811;
}

/* side panes */
.pane {
    border-left: 1px solid #d8d8d4;
    background: #f2f2ee;
}

.viz {
    width: 181px;
}

.fields {
    position: relative;
    width: 190px;
}

.pane-head {
    display: flex;
    justify-content: space-between;
    align-items: center;
    height: 46px;
    padding: 0 12px;
}

.pane-head h2 {
    font-size: 15px;
    font-weight: 600;
    color: #444;
}

.gallery {
    display: grid;
    grid-template-columns: repeat(6, 28px);
    grid-auto-rows: 24px;
    justify-items: center;
    align-items: center;
    padding: 3px 4px 0;
    border-bottom: 1px solid #d8d8d4;
}

.gallery button {
    width: 22px;
    height: 22px;
}

.gallery svg {
    width: 18px;
    height: 18px;
}

.gallery .selected {
    border: 2px solid #555;
    background: #d0d0d0;
}

.gallery .powerapps {
    width: 20px;
    height: 20px;
    background: #742774;
}

.letters {
    font-size: 14px;
    line-height: 20px;
    color: #7ba3d4;
}

.big {
    font-size: 18px;
}

.pane-tabs {
    display: flex;
    height: 36px;
    padding-left: 12px;
}

.pane-tabs button {
    width: 40px;
    border-bottom: 3px solid transparent;
}

.pane-tabs .active {
    border-bottom-color: #e8c62a;
}

.wells {
    position: relative;
    padding: 4px 7px 0 4px;
}

.wells h3 {
    padding: 2px 7px 7px;
    font-size: 11px;
    font-weight: 400;
}

.well {
    height: 36px;
    margin-bottom: 8px;
    padding: 3px;
    border: 1px dashed #bbb;
    background: #fff;
}

.well.empty {
    height: 27px;
    padding: 5px 10px;
}

.field {
    display: flex;
    align-items: center;
    gap: 4px;
    height: 22px;
    padding: 0 2px 0 3px;
    border: 1px solid #bbb;
    border-radius: 2px;
    background: #ebe9e8;
}

.field button {
    width: 12px;
}

.field button:first-of-type {
    margin-left: auto;
}

.scroll-thumb {
    position: absolute;
    top: 0;
    right: 0;
    width: 6px;
    height: 134px;
    background: #d0d0ce;
}

.search {
    display: flex;
    align-items: center;
    height: 30px;
    margin: 5px 4px 0;
    padding: 0 11px;
    border: 1px solid #c0c0bc;
    border-radius: 2px;
    background: #fff;
}

.search label {
    display: flex;
}

.search input {
    width: 100%;
    margin-left: 8px;
    padding: 0;
    border: none;
    background: none;
    font: inherit;
    font-size: 12px;
}

.search input::placeholder {
    color: #333;
}

.tree {
    margin-top: 4px;
    padding: 9px 4px;
    border-top: 1px solid #d8d8d4;
    font-size: 12px;
}

.table-row {
    gap: 6px;
    height: 27px;
    color: #252423;
}

.table-icon {
    margin-top: 6px;
}

.tree label {
    display: flex;
    align-items: center;
    height: 24px;
    padding-left: 28px;
    font-size: 11px;
}

.table-row + label {
    margin-top: 4px;
}

.tree input {
    appearance: none;
    display: grid;
    place-items: center;
    width: 12px;
    height: 12px;
    margin: 0;
    border: 1px solid #666;
    border-radius: 2px;
}

.tree input:checked {
    border-color: #f2c811;
    background: #f2c811;
}

.tree input:checked::before {
    content: "";
    width: 7px;
    height: 3px;
    border: solid #333;
    border-width: 0 0 1px 1px;
    transform: rotate(-45deg);
}

.kind {
    display: flex;
    justify-content: center;
    width: 20px;
    margin-right: 5px;
}

.cursor {
    position: absolute;
    left: 6px;
    top: 214px;
}

.status {
    height: 22px;
    padding: 3px 5px;
    border-top: 1px solid #d0d0cc;
}

/* taskbar */
.taskbar {
    display: flex;
    justify-content: space-between;
    height: 40px;
    background: #1e2e33;
    color: #fff;
}

.apps {
    display: flex;
    padding-left: 1px;
}

.apps button {
    position: relative;
    width: 49px;
}

.running::after {
    content: "";
    position: absolute;
    left: 5px;
    right: 5px;
    bottom: 0;
    height: 3px;
    background: #76aee0;
}

.apps .current {
    border: solid #1e2e33;
    border-width: 0 2px;
    background: #4a585c;
}

.apps .current::after {
    left: 0;
    right: 0;
}

.tray {
    display: flex;
    align-items: center;
}

.tray button {
    width: 24px;
}

.clock {
    width: 66px;
    line-height: 18px;
    text-align: center;
}

.tray .notice {
    width: 48px;
    margin-right: 9px;
}
```
